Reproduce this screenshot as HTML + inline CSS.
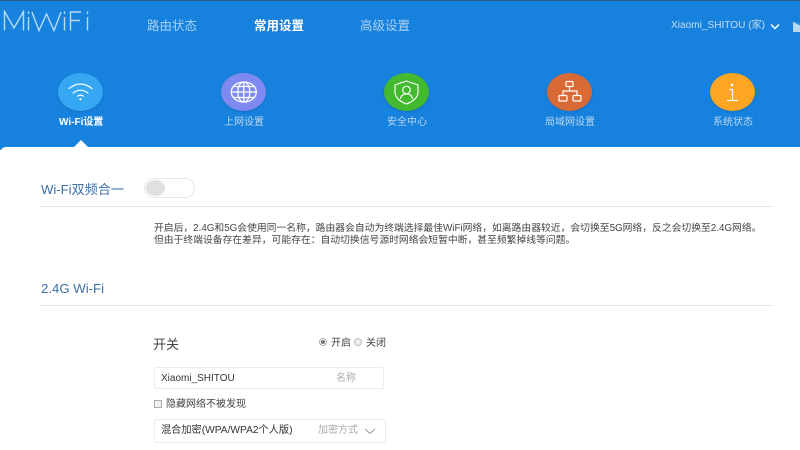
<!DOCTYPE html>
<html lang="zh">
<head>
<meta charset="utf-8">
<title>MiWiFi</title>
<style>
html,body{margin:0;padding:0;width:800px;height:450px;overflow:hidden;background:#fff}
body{font-family:"Liberation Sans","Noto Sans CJK SC",sans-serif}
#w{position:relative;width:800px;height:450px;overflow:hidden;filter:blur(.3px)}
.t{position:absolute;white-space:nowrap;line-height:1;transform-origin:0 50%}
.c{position:absolute;white-space:nowrap;line-height:1;text-align:center;font-size:10px;color:#b9d6f2;width:120px}
.e{position:absolute;top:73px;width:45px;height:38px;border-radius:50%;box-shadow:0 1px 2px rgba(0,50,110,.25)}
.e svg{position:absolute;left:0;top:0}
.line{position:absolute;height:1px;background:#e3e3e3;left:41px;width:732px}
.box{position:absolute;border:1px solid #ececec;border-radius:2px;background:#fff;box-sizing:border-box}
</style>
</head>
<body>
<div id="w">
<div style="position:absolute;left:0;top:0;width:800px;height:150px;background:#1782dd"></div>
<div style="position:absolute;left:0;top:0;width:800px;height:1px;background:#2b5a85"></div>

<svg style="position:absolute;left:3px;top:10px" width="88" height="22" viewBox="0 0 88 22" fill="none" stroke="#b5dbf7" stroke-width="1.400"><title>MiWiFi</title>
<path d="M1.500 20.500V1.500L11 18 20.500 1.500V20.500"/><path d="M25.500 7V20.500"/><path d="M25.500 1.500V4"/><path d="M29 2 36 20.500 43.500 4 51 20.500 58 2"/><path d="M61.500 7V20.500"/><path d="M61.500 1.500V4"/><path d="M67.500 20.500V2H78M67.500 10.500H77"/><path d="M84.500 7V20.500"/><path d="M84.500 1.500V4"/></svg>

<div class="t" style="left:147px;top:20px;font-size:12.500px;color:#a9d0f2">路由状态</div>
<div class="t" style="left:254px;top:20px;font-size:12.500px;color:#fff;font-weight:bold">常用设置</div>
<div class="t" style="left:360px;top:20px;font-size:12.500px;color:#a9d0f2">高级设置</div>
<div class="t" style="left:671px;top:21px;font-size:10.100px;color:#c5def5">Xiaomi_SHITOU (家)</div>
<svg style="position:absolute;left:769px;top:23px" width="12" height="8" fill="none" stroke="#fff" stroke-width="1.500"><path d="M2 1.500 6 5.500 10 1.500"/></svg>
<svg style="position:absolute;left:793px;top:20px" width="7" height="12"><path d="M0 1 7 4V12H0Z" fill="#bcd9f2"/><path d="M0 1 7 5" stroke="#1782dd" fill="none"/></svg>

<div class="e" style="left:58px;background:#36a8f3"><svg width="45" height="38" fill="none" stroke="#fff" stroke-width="1.100"><path d="M10.500 16Q22.500 6 34.500 16"/><path d="M14.700 20.300Q22.500 14 30.300 20.300"/><path d="M19.200 23.500Q22.500 20.500 25.800 23.500"/><circle cx="22.500" cy="26.300" r="1.100" fill="#fff" stroke="none"/></svg></div>
<div class="e" style="left:221px;background:#7e8aef"><svg width="45" height="38" fill="none" stroke="#fff" stroke-width="1.300"><ellipse cx="22.800" cy="19" rx="12.500" ry="10"/><ellipse cx="22.800" cy="19" rx="6" ry="10"/><path d="M10.300 19H35.300M12.500 13.500H33M12.500 24.500H33"/><path d="M22.800 9V29"/></svg></div>
<div class="e" style="left:384px;background:#43b92f"><svg width="45" height="38" fill="none" stroke="#fff" stroke-width="1.100"><path d="M22.500 8 34 12V20Q33 27 22.500 31 12 27 11 20V12Z"/><circle cx="22.500" cy="17" r="3.800"/><path d="M16.500 26Q17 21 22.500 21 28 21 28.500 26"/></svg></div>
<div class="e" style="left:547px;background:#da6a35"><svg width="45" height="38" fill="none" stroke="#fff" stroke-width="1.200"><rect x="19" y="8.500" width="7" height="5" rx="1"/><rect x="12" y="22.500" width="8" height="5.500" rx="1"/><rect x="26" y="22.500" width="8" height="5.500" rx="1"/><path d="M22.500 13.500V18M16 22.500V18H30V22.500"/></svg></div>
<div class="e" style="left:710px;background:#fca624"><svg width="45" height="38" fill="none" stroke="#fff" stroke-width="1.200"><circle cx="22" cy="12" r="1.300" fill="#fff" stroke="none"/><path d="M19.500 16.500H22.500V27M17 27.500H28"/></svg></div>

<div class="t" style="left:59px;top:118px;font-size:10px;color:#fff;font-weight:bold">Wi-Fi设置</div>
<div class="c" style="left:184px;top:118px">上网设置</div>
<div class="c" style="left:347px;top:118px">安全中心</div>
<div class="c" style="left:510px;top:118px">局域网设置</div>
<div class="c" style="left:673px;top:118px">系统状态</div>

<div style="position:absolute;left:0;top:147px;width:800px;height:303px;background:#fff;border-radius:6px 0 0 0"></div>
<div style="position:absolute;left:73px;top:140px;width:0;height:0;border-left:8px solid transparent;border-right:8px solid transparent;border-bottom:8px solid #fff"></div>

<div class="t" style="left:41px;top:182.500px;font-size:13.100px;color:#3b6ea8">Wi-Fi双频合一</div>
<div style="position:absolute;left:144px;top:178px;width:51px;height:20px;box-sizing:border-box;border:1px solid #e8e8e8;border-radius:10px;background:#fff"></div>
<div style="position:absolute;left:146px;top:180px;width:19px;height:16px;border-radius:50%;background:#e0e0e0"></div>
<div class="line" style="top:206px"></div>

<div class="t" style="left:154px;top:224px;font-size:9.800px;color:#444">开启后，2.4G和5G会使用同一名称，路由器会自动为终端选择最佳WiFi网络，如离路由器较近，会切换至5G网络，反之会切换至2.4G网络。</div>
<div class="t" style="left:154px;top:236px;font-size:9.800px;color:#444">但由于终端设备存在差异，可能存在：自动切换信号源时网络会短暂中断，甚至频繁掉线等问题。</div>

<div class="t" style="left:41px;top:281.500px;font-size:13.200px;color:#3b6ea8">2.4G Wi-Fi</div>
<div class="line" style="top:305px"></div>

<div class="t" style="left:153px;top:337.500px;font-size:13px;color:#444">开关</div>
<div style="position:absolute;left:319px;top:338px;width:8px;height:8px;box-sizing:border-box;border:1px solid #aaa;border-radius:50%;background:#fff"></div>
<div style="position:absolute;left:321px;top:340px;width:4px;height:4px;border-radius:50%;background:#777"></div>
<div class="t" style="left:331px;top:338.500px;font-size:10px;color:#444">开启</div>
<div style="position:absolute;left:354px;top:338px;width:8px;height:8px;box-sizing:border-box;border:1px solid #bbb;border-radius:50%;background:#eee"></div>
<div class="t" style="left:366px;top:338.500px;font-size:10px;color:#444">关闭</div>

<div class="box" style="left:154px;top:367px;width:230px;height:22px"></div>
<div class="t" style="left:161px;top:373.500px;font-size:10px;color:#333">Xiaomi_SHITOU</div>
<div class="t" style="left:336px;top:374px;font-size:10px;color:#aaa">名称</div>

<div style="position:absolute;left:154px;top:400px;width:8px;height:8px;box-sizing:border-box;border:1px solid #aaa;background:#f2f2f2"></div>
<div class="t" style="left:166px;top:399.500px;font-size:10px;color:#444">隐藏网络不被发现</div>

<div class="box" style="left:154px;top:419px;width:232px;height:24px"></div>
<div class="t" style="left:161px;top:426px;font-size:10.200px;color:#333">混合加密(WPA/WPA2个人版)</div>
<div class="t" style="left:318px;top:426px;font-size:10px;color:#aaa">加密方式</div>
<svg style="position:absolute;left:364px;top:428px" width="12" height="7" fill="none" stroke="#999" stroke-width="1"><path d="M1 1 6 5.500 11 1"/></svg>
</div>
</body>
</html>
